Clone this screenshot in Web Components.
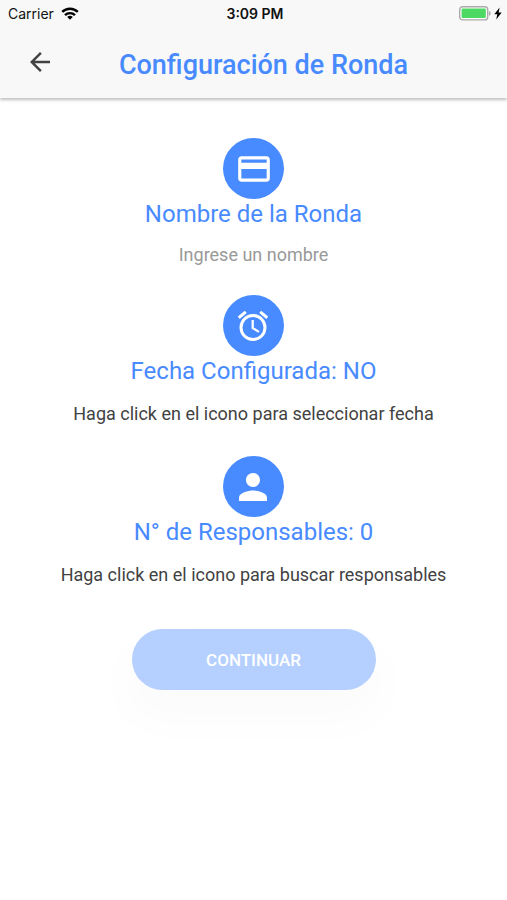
<!DOCTYPE html>
<html lang="es">
<head>
<meta charset="utf-8">
<meta name="viewport" content="width=device-width, initial-scale=1">
<title>Configuración de Ronda</title>
<style>
  :root{
    --primary:#488aff;
    --bar:#f8f8f8;
    --text:#424242;
    --hint:#999;
  }
  body{margin:0;background:#fff;color:var(--text);font-family:Roboto,"Liberation Sans",sans-serif;font-size:18px}
</style>
</head>
<body>
<ronda-page></ronda-page>

<script>
const ICONS = {
  card:  {size:38, svg:'<path d="M20 4H4c-1.11 0-1.99.89-1.99 2L2 18c0 1.110.89 2 2 2h16c1.110 0 2-.89 2-2V6c0-1.110-.89-2-2-2zm0 14H4v-6h16v6zm0-10H4V6h16v2z"/>'},
  alarm: {size:36, svg:'<g fill="none" stroke="currentColor" stroke-width="2"><circle cx="12" cy="13" r="8"/><path d="M2.500 6.500 7.200 2.600M21.500 6.500 16.800 2.600"/><path stroke-width="1.500" d="M11.800 8v5.400l4.200 2.500"/></g>'},
  person:{size:42, svg:'<path d="M12 12c2.210 0 4-1.790 4-4s-1.790-4-4-4-4 1.790-4 4 1.790 4 4 4zm0 2c-2.670 0-8 1.340-8 4v2h16v-2c0-2.660-5.330-4-8-4z"/>'},
};

// Barra de estado del teléfono
customElements.define('status-bar', class extends HTMLElement{
  constructor(){
    super();
    this.attachShadow({mode:'open'}).innerHTML = `
      <style>
        :host{display:grid;grid-template-columns:1fr auto 1fr;align-items:center;height:26px;padding:0 5px 0 8px;color:#111;font-family:Inter,"Liberation Sans",sans-serif;font-size:14px}
        .net,.power{display:flex;align-items:center}
        .net{gap:7px}
        .power{justify-content:flex-end;gap:3px}
        .time{font-weight:600}
        svg{display:block}
      </style>
      <span class="net"><span>Carrier</span>
        <svg width="18" height="13" viewBox="0 0 18 13" fill="none" stroke="#000" stroke-width="2.400" aria-hidden="true">
          <path d="M1.200 4.900a11.200 11.200 0 0 1 15.600 0"/><path d="M4 8.100a7.200 7.200 0 0 1 10 0"/>
          <path d="M9 12.800 6.200 10a4 4 0 0 1 5.600 0z" fill="#000" stroke="none"/>
        </svg>
      </span>
      <span class="time">3:09 PM</span>
      <span class="power">
        <svg width="32" height="15" viewBox="0 0 32 15" aria-hidden="true">
          <rect x=".7" y=".7" width="28" height="13.200" rx="3" fill="#fff" stroke="#a9a9a9" stroke-width="1.400"/>
          <rect x="2.600" y="2.600" width="24.200" height="9.400" rx="1" fill="#4cd964"/>
          <path d="M30 5c2.200.8 2.200 4 0 4.800z" fill="#a9a9a9"/>
        </svg>
        <svg width="8" height="13" viewBox="0 0 8 13" aria-hidden="true"><path d="M5.600.5.3 7.200h3L2.200 12.500 7.700 5.600H4.600z"/></svg>
      </span>`;
  }
});

customElements.define('nav-bar', class extends HTMLElement{
  constructor(){
    super();
    this.attachShadow({mode:'open'}).innerHTML = `
      <style>
        :host{display:flex;align-items:center;height:72px}
        button{display:flex;justify-content:center;width:80px;padding:0;border:0;background:none;color:var(--text);cursor:pointer}
        h1{flex:1;margin:0;padding:6px 60px 0 0;color:var(--primary);font-size:27px;font-weight:500;line-height:32px;text-align:center}
      </style>
      <button type="button" aria-label="Volver">
        <svg width="30" height="30" viewBox="0 0 24 24" fill="currentColor" aria-hidden="true"><path d="M20 11H7.830l5.590-5.590L12 4l-8 8 8 8 1.410-1.410L7.830 13H20v-2z"/></svg>
      </button>
      <h1><slot></slot></h1>`;
  }
});

// Icono redondo + título + contenido
customElements.define('config-item', class extends HTMLElement{
  constructor(){
    super();
    this.attachShadow({mode:'open'});
  }
  connectedCallback(){
    const ico = ICONS[this.getAttribute('icon')];
    const label = this.getAttribute('label');
    this.shadowRoot.innerHTML = `
      <style>
        :host{display:flex;flex-direction:column;align-items:center;text-align:center}
        button{display:flex;align-items:center;justify-content:center;width:61px;height:61px;padding:0;border:0;border-radius:50%;background:var(--primary);color:#fff;cursor:pointer}
        h2{margin:0;color:var(--primary);font-size:24px;font-weight:400;line-height:30px}
        .body{margin-top:16px;line-height:24px}
      </style>
      <button type="button" aria-label="${label}">
        <svg width="${ico.size}" height="${ico.size}" viewBox="0 0 24 24" fill="currentColor" aria-hidden="true">${ico.svg}</svg>
      </button>
      <h2>${label}</h2>
      <div class="body"><slot></slot></div>`;
  }
});

customElements.define('name-field', class extends HTMLElement{
  constructor(){
    super();
    this.attachShadow({mode:'open'}).innerHTML = `
      <style>
        :host{display:block}
        input{display:block;width:240px;height:20px;padding:0;border:0;outline:0;background:none;color:var(--text);font:inherit;line-height:20px;text-align:center}
        input::placeholder{color:var(--hint);opacity:1}
      </style>
      <input type="text" placeholder="Ingrese un nombre" aria-label="Nombre de la Ronda">`;
  }
});

customElements.define('round-button', class extends HTMLElement{
  constructor(){
    super();
    this.attachShadow({mode:'open'}).innerHTML = `
      <style>
        :host{display:block;width:50%;min-width:244px}
        button{width:100%;height:61px;border:0;border-radius:31px;background:var(--primary);color:#fff;font:500 17px Roboto,"Liberation Sans",sans-serif;text-transform:uppercase;box-shadow:0 24px 40px rgba(0,0,0,.04)}
        button:disabled{opacity:.4}
      </style>
      <button type="button" disabled><slot></slot></button>`;
  }
});

customElements.define('ronda-page', class extends HTMLElement{
  constructor(){
    super();
    this.attachShadow({mode:'open'}).innerHTML = `
      <style>
        :host{display:flex;flex-direction:column;min-height:100vh}
        header{background:var(--bar);box-shadow:0 2px 3px rgba(0,0,0,.25)}
        main{display:flex;flex-direction:column;align-items:center;gap:30px;padding:40px 16px}
        round-button{margin-top:12px}
      </style>
      <header>
        <status-bar></status-bar>
        <nav-bar>Configuración de Ronda</nav-bar>
      </header>
      <main>
        <config-item icon="card" label="Nombre de la Ronda"><name-field></name-field></config-item>
        <config-item icon="alarm" label="Fecha Configurada: NO">Haga click en el icono para seleccionar fecha</config-item>
        <config-item icon="person" label="N° de Responsables: 0">Haga click en el icono para buscar responsables</config-item>
        <round-button>Continuar</round-button>
      </main>`;
  }
});
</script>
</body>
</html>
